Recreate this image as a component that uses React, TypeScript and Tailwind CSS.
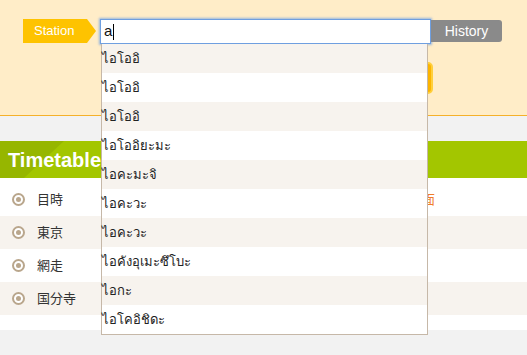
import React from "react";

const stations = ["目時", "東京", "網走", "国分寺"];
const suggestions = [
  "ไอโออิ",
  "ไอโออิ",
  "ไอโออิ",
  "ไอโออิยะมะ",
  "ไอคะมะจิ",
  "ไอคะวะ",
  "ไอคะวะ",
  "ไอคังอุเมะซึโบะ",
  "ไอกะ",
  "ไอโคอิชิดะ",
];

function Radio() {
  return (
    <span className="flex h-[13px] w-[13px] items-center justify-center rounded-full border-[2px] border-[#b9a68c] bg-white">
      <span className="h-[5px] w-[5px] rounded-full bg-[#b9a68c]" />
    </span>
  );
}

export default function App() {
  return (
    <div
      className="relative h-[355px] w-[527px] overflow-hidden bg-[#f2f2f2]"
      style={{ fontFamily: '"Liberation Sans", "Noto Sans", "Noto Sans CJK JP", sans-serif' }}
    >
      {/* Top search panel */}
      <div className="h-[116px] border-b border-[#f5b12a] bg-[#ffedc8] pt-[19px]">
        <div className="flex items-start">
          <div className="ml-[23px] flex h-[24px] w-[73px] items-center bg-[#fec300] pl-[11px] text-[13px] text-white [clip-path:polygon(0_0,64px_0,73px_12px,64px_24px,0_24px)]">
            Station
          </div>
          <div className="ml-[4px] flex h-[25px] w-[331px] items-center border border-[#6f9fe0] bg-white pl-[3px] text-[15px] text-[#111] shadow-[0_0_2px_1px_rgba(110,160,230,0.7)]">
            a<span className="ml-[1px] h-[16px] w-[1px] bg-black" />
          </div>
          <div className="mt-[1px] flex h-[22px] w-[71px] items-center justify-center rounded-r-[3px] bg-[#8a8a8a] text-[14px] text-white">
            History
          </div>
        </div>
        <div className="ml-[330px] mt-[18px] h-[32px] w-[103px] rounded-[5px] border-[2px] border-[#ffcf3a] bg-[#fcb400]" />
      </div>

      {/* Gray spacer */}
      <div className="h-[25px]" />

      {/* Timetable header */}
      <div className="relative h-[37px] overflow-hidden bg-[#a3c600]">
        <div className="absolute left-0 top-0 h-full w-[64px] bg-[#96b600] [clip-path:polygon(0_0,64px_0,24px_37px,0_37px)]" />
        <div className="relative flex h-full items-center pl-[8px] text-[20px] font-bold text-white">
          Timetable
        </div>
      </div>

      {/* Station list */}
      <div className="bg-white pb-[15px] pt-[5px]">
        {stations.map((s, i) => (
          <div
            key={s}
            className={`flex h-[33px] items-center ${i % 2 === 1 ? "bg-[#f7f3ee]" : "bg-white"}`}
          >
            <div className="ml-[12px]">
              <Radio />
            </div>
            <span className="ml-[12px] w-[200px] text-[13px] text-[#333]">{s}</span>
            {i === 0 && <span className="ml-[172px] text-[13px] text-[#f07c2a]">画面</span>}
          </div>
        ))}
      </div>

      {/* Autocomplete dropdown */}
      <div className="absolute left-[101px] top-[44px] w-[327px] border border-t-0 border-[#c6b8a8] bg-white">
        {suggestions.map((t, i) => (
          <div
            key={i}
            className={`flex h-[29px] items-center text-[13px] text-[#222] ${i % 2 === 0 ? "bg-[#f7f3ee]" : "bg-white"}`}
          >
            {t}
          </div>
        ))}
      </div>
    </div>
  );
}
